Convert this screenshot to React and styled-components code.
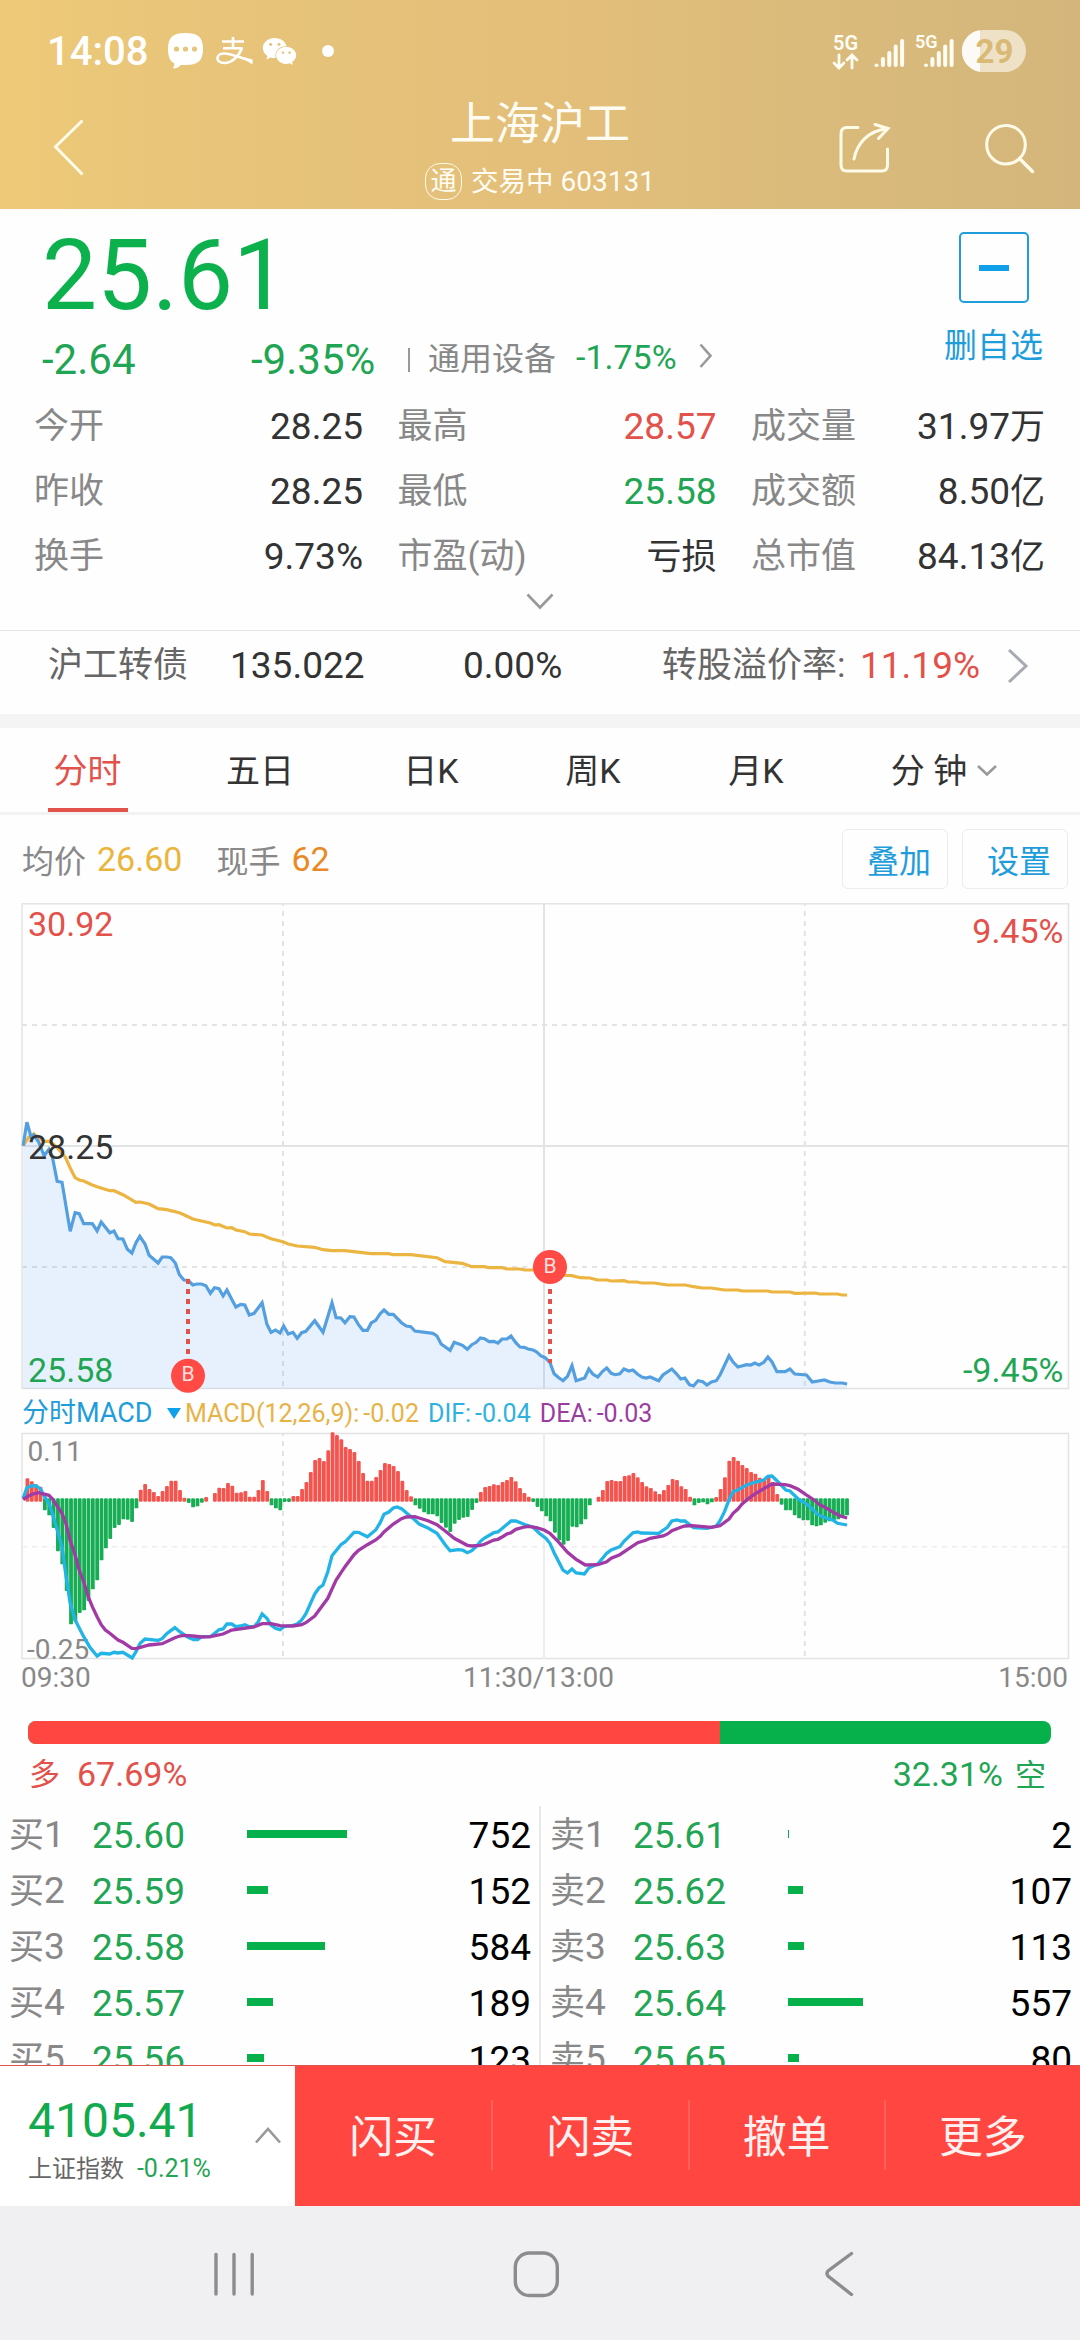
import React from 'react'
import styled, { createGlobalStyle } from 'styled-components'
import { FaWeixin } from 'react-icons/fa'

const RED = '#e2514a'
const GREEN = '#1fa553'
const BLUE = '#1f9ddb'

const stats = [
    ['今开', '28.25', '', '最高', '28.57', '', '成交量', '31.97', '万'],
    ['昨收', '28.25', '', '最低', '25.58', '', '成交额', '8.50', '亿'],
    ['换手', '9.73%', '', '市盈(动)', '', '亏损', '总市值', '84.13', '亿'],
]
const statColors = { '28.57': RED, '25.58': GREEN }

const tabs = ['分时', '五日', '日K', '周K', '月K', '分 钟']

const buys = [['25.60', 752], ['25.59', 152], ['25.58', 584], ['25.57', 189], ['25.56', 123]]
const sells = [['25.61', 2], ['25.62', 107], ['25.63', 113], ['25.64', 557], ['25.65', 80]]

const actions = ['闪买', '闪卖', '撤单', '更多']

const price = '67,767 78,697 90,740 98,735 112,755 128,797 142,778 152,800 166,874 180,877 204,1024 218,968 230,971 243,1001 268,1001 282,1023 294,996 319,1028 331,1023 343,1046 357,1047 370,1078 383,1089 395,1058 406,1039 421,1062 433,1096 459,1119 471,1101 484,1101 496,1103 509,1119 521,1154 534,1170 546,1171 560,1185 572,1182 585,1182 598,1187 611,1210 623,1193 636,1196 648,1218 659,1200 673,1228 685,1251 699,1243 711,1245 724,1275 738,1270 761,1238 775,1303 787,1327 800,1320 813,1329 824,1308 837,1332 851,1327 863,1345 876,1328 888,1324 914,1292 938,1327 950,1287 964,1238 976,1283 990,1284 1002,1298 1016,1280 1028,1281 1041,1304 1054,1321 1067,1321 1078,1299 1091,1291 1104,1271 1115,1260 1129,1273 1142,1273 1166,1298 1180,1308 1193,1310 1205,1323 1257,1330 1269,1338 1281,1362 1307,1381 1319,1357 1343,1366 1357,1378 1370,1364 1383,1357 1395,1344 1407,1346 1420,1355 1434,1354 1446,1359 1458,1347 1472,1347 1484,1338 1498,1358 1510,1371 1522,1372 1534,1377 1548,1380 1558,1385 1570,1397 1583,1403 1597,1417 1609,1451 1621,1462 1635,1472 1648,1459 1661,1427 1673,1472 1698,1464 1710,1437 1722,1453 1736,1461 1750,1444 1762,1434 1775,1450 1787,1454 1800,1451 1812,1437 1826,1443 1838,1440 1852,1453 1864,1461 1876,1464 1888,1461 1913,1472 1925,1455 1951,1437 1963,1450 1977,1467 1989,1464 2002,1484 2014,1488 2027,1472 2041,1475 2053,1485 2066,1476 2080,1472 2091,1455 2117,1397 2129,1416 2143,1431 2168,1424 2180,1425 2192,1419 2204,1425 2218,1417 2230,1401 2242,1416 2256,1445 2280,1445 2294,1437 2308,1452 2342,1455 2359,1476 2394,1470 2410,1476 2426,1479 2446,1479 2460,1482'
const average = '67,767 83,742 98,732 112,742 128,754 142,754 152,760 166,773 180,790 190,802 204,834 218,863 230,870 243,873 268,885 282,890 319,902 331,902 357,914 395,937 407,936 433,942 459,956 484,959 521,968 534,974 560,987 611,999 623,1005 636,1004 659,1014 673,1013 685,1020 711,1025 724,1032 761,1035 787,1046 824,1056 837,1062 863,1068 914,1072 938,1079 964,1082 1002,1082 1078,1091 1129,1091 1142,1094 1193,1094 1269,1103 1293,1115 1343,1120 1370,1130 1407,1130 1420,1133 1458,1133 1472,1137 1510,1137 1524,1140 1558,1140 1597,1150 1645,1156 1661,1157 1685,1163 1713,1164 1735,1170 1762,1170 1775,1173 1812,1172 1825,1176 1850,1176 1863,1179 1900,1179 1938,1185 1990,1185 2014,1190 2040,1194 2066,1194 2104,1200 2143,1200 2155,1203 2230,1203 2242,1206 2294,1206 2308,1210 2367,1209 2380,1212 2432,1212 2445,1215 2460,1215'
const dif = '67,325 78,293 90,288 104,287 118,297 128,318 142,340 152,370 166,420 180,470 192,560 204,640 218,690 243,740 260,770 282,798 294,790 319,792 331,787 343,789 357,787 370,795 384,804 395,785 407,760 421,747 459,751 471,746 484,731 496,722 508,713 522,725 546,742 562,749 574,749 585,740 611,740 636,719 648,717 659,702 673,702 685,710 699,708 711,704 724,710 738,710 750,695 761,672 775,685 787,705 800,715 813,719 825,710 851,706 863,702 876,690 888,672 914,612 926,594 938,585 952,545 964,497 990,464 1002,456 1028,427 1041,427 1067,440 1091,420 1104,398 1115,373 1129,366 1142,354 1153,351 1166,356 1180,368 1205,390 1217,402 1243,414 1269,430 1293,464 1307,482 1331,479 1343,480 1357,488 1370,482 1383,470 1395,454 1407,444 1434,428 1446,426 1484,393 1498,393 1522,403 1548,412 1566,430 1585,445 1597,460 1609,488 1635,540 1648,549 1661,537 1673,549 1697,552 1710,534 1736,522 1762,490 1775,480 1800,470 1812,454 1838,428 1852,426 1862,429 1913,430 1938,412 1951,393 1966,390 1977,393 1989,393 2014,413 2053,415 2080,408 2091,392 2104,365 2117,330 2129,305 2143,300 2168,285 2192,277 2218,270 2230,259 2242,258 2256,272 2282,300 2294,303 2318,327 2332,335 2346,345 2362,360 2376,374 2394,382 2406,386 2420,391 2432,400 2460,405'
const dea = '67,329 78,321 92,313 112,308 142,316 152,326 166,348 180,370 192,402 204,452 218,495 230,540 243,575 256,620 268,650 282,680 294,704 306,720 319,730 343,750 357,757 383,775 395,776 433,765 471,761 508,743 522,738 534,736 560,738 585,741 611,740 648,732 673,720 738,711 761,701 787,701 813,707 851,708 876,704 888,698 914,678 952,625 964,597 976,570 1002,530 1028,494 1041,481 1067,464 1091,450 1104,439 1115,426 1142,402 1166,386 1180,381 1205,380 1217,384 1243,392 1269,404 1293,423 1319,445 1357,466 1370,468 1395,466 1407,463 1434,450 1446,448 1458,441 1472,432 1484,428 1498,418 1522,411 1534,409 1558,413 1580,420 1597,430 1621,455 1648,487 1673,508 1700,525 1736,524 1762,515 1775,505 1800,494 1826,476 1852,458 1875,451 1888,445 1926,438 1940,431 1951,422 1977,412 1989,408 2010,407 2066,412 2091,407 2117,387 2129,370 2143,357 2155,342 2168,330 2192,312 2218,296 2242,282 2280,284 2294,287 2318,298 2346,318 2367,332 2380,344 2400,354 2420,367 2440,378 2460,384'
const ZERO = 329
const bars = [
    0, 265, 274, 283, 290, 360, 375, 413, 483, 522, 602, 702, 695, 668, 660, 632, 597, 570, 510, 474,
    446, 413, 404, 387, 388, 395, 354, 299, 282, 297, 306, 318, 303, 288, 272, 272, 300, 323, 338, 351,
    348, 337, 321, 0, 309, 293, 294, 279, 287, 308, 307, 303, 320, 320, 300, 270, 303, 345, 354, 360,
    335, 335, 318, 318, 297, 276, 246, 210, 204, 213, 181, 127, 135, 148, 171, 177, 186, 213, 249, 272,
    272, 261, 240, 219, 222, 228, 243, 272, 300, 319, 345, 355, 366, 372, 372, 378, 398, 412, 425, 400,
    389, 382, 380, 359, 338, 306, 291, 288, 283, 285, 276, 270, 261, 274, 294, 309, 320, 335, 350, 363,
    378, 393, 427, 450, 463, 452, 409, 411, 402, 387, 345, 0, 320, 300, 273, 270, 273, 273, 258, 256,
    249, 262, 276, 289, 294, 304, 312, 300, 285, 267, 270, 289, 297, 320, 345, 338, 336, 342, 336, 321,
    297, 262, 212, 201, 212, 225, 234, 246, 251, 263, 270, 262, 276, 312, 343, 360, 360, 375, 384, 390,
    390, 405, 408, 405, 397, 393, 390, 387, 382, 375,
]

const px = (x) => x / 2.904
const line = (data, top) =>
    data.split(' ').map(p => {
        const [x, y] = p.split(',')
        return `${px(x).toFixed(1)},${(y / 3 - top).toFixed(1)}`
    }).join(' ')

function Signal({ x }) {
    return [63.5, 57, 51, 44.5, 39].map((top, i) => (
        <rect key={top} x={x + i * 6.4} y={top - 30} width="4" height={67 - top} rx="2" fill="#fffdf3" />
    ))
}

function StatusBar() {
    return (
        <Status>
            <Clock>14:08</Clock>
            <svg width="35" height="36" viewBox="0 0 35 36">
                <path d="M17.500 0C30 0 35 4 35 16C35 28 30 32 17.500 32L13 32Q9 36 5.500 35.500Q4.500 35 6 33.500L6.500 30.500C1.500 28 0 23 0 16C0 4 5 0 17.500 0Z" fill="#fff" />
                <circle cx="8.500" cy="16" r="2.600" fill="#e8c57a" />
                <circle cx="17.500" cy="16" r="2.600" fill="#e8c57a" />
                <circle cx="26.500" cy="16" r="2.600" fill="#e8c57a" />
            </svg>
            <PayIcon width="37" height="28" viewBox="0 0 37 28" fill="none" stroke="#fff" strokeWidth="2.600">
                <path d="M6 4.500H28M17 0V11M7 11.200H26.500" />
                <path d="M26 11C23 19 16 26 8.500 26C-1 26 -.500 16.500 8 16.500C15 16.500 24 20.500 36 24.500" />
                <path d="M22 18.500L36.500 22.500V27.500Z" fill="#fff" stroke="none" />
            </PayIcon>
            <FaWeixin size={35} color="#fff" />
            <Dot />
            <Right>
                <svg width="194" height="42" viewBox="832 0 194 42">
                    <text x="833" y="20" fontSize="20" fontWeight="600" fill="#fffdf3">5G</text>
                    <path d="M839 25V37M834 33L839 38L844 33M852 38V26M847 30L852 25L857 30" fill="none" stroke="#fffdf3" strokeWidth="2.800" strokeLinecap="round" />
                    <Signal x={874.5} />
                    <text x="915" y="17.500" fontSize="18" fontWeight="600" fill="#fffdf3">5G</text>
                    <Signal x={924} />
                    <path d="M983 0H1005A21 21 0 0 1 1005 42H983A21 21 0 0 1 983 0Z" fill="#efe1c6" />
                    <path d="M980 .2V41.800A21 21 0 0 1 980 .2Z" fill="#fcfaf6" />
                    <text x="994.500" y="33" textAnchor="middle" fontSize="33" fontWeight="700" fill="#d8b976">29</text>
                </svg>
            </Right>
        </Status>
    )
}

function PriceChart() {
    return (
        <Chart width="1080" height="491" viewBox="0 0 1080 491">
            <g stroke="#e3e3e3" strokeWidth="1.500" fill="none">
                <rect x="22" y=".8" width="1046.500" height="484.700" />
                <path d="M22 243H1068M544 0V486" strokeWidth="2" />
                <path d="M22 122H1068M22 364H1068" strokeWidth="2" strokeDasharray="5 5" />
                <path d="M283 0V486M804.800 0V486" strokeWidth="2" strokeDasharray="5 5" strokeDashoffset="2" />
            </g>
            <polygon points={`${line(price, 13)} 847,485.500 23,485.500`} fill="#4a9eff" fillOpacity=".13" />
            <polyline points={line(average, 13)} fill="none" stroke="#ecb440" strokeWidth="3.200" />
            <polyline points={line(price, 13)} fill="none" stroke="#539fe0" strokeWidth="3.200" />
            <g stroke={RED} strokeWidth="4" strokeDasharray="5 5">
                <path d="M188 376V453" />
                <path d="M550 386V460" />
            </g>
            <g fontSize="21" fill="#ffe3e0" textAnchor="middle">
                <circle cx="188" cy="472.700" r="17" fill="#ff4a45" />
                <text x="188" y="478">B</text>
                <circle cx="550" cy="364" r="17" fill="#ff4a45" />
                <text x="550" y="370">B</text>
            </g>
            <g fontSize="34">
                <text x="28" y="32.700" fill={RED}>30.92</text>
                <text x="28" y="256.300" fill="#333">28.25</text>
                <text x="28" y="478.700" fill={GREEN}>25.58</text>
                <text x="1063.500" y="39.700" fill={RED} textAnchor="end">9.45%</text>
                <text x="1063.500" y="478.700" fill={GREEN} textAnchor="end">-9.45%</text>
            </g>
        </Chart>
    )
}

function MacdChart() {
    return (
        <Chart width="1080" height="230" viewBox="0 0 1080 230">
            <g stroke="#e3e3e3" strokeWidth="1.500" fill="none">
                <rect x="22" y="3.500" width="1046.500" height="225" />
                <path d="M544 3V229" strokeWidth="2" stroke="#ededed" />
                <path d="M22 116.700H1068" strokeWidth="1.500" stroke="#ededed" strokeDasharray="5 5" />
                <path d="M283 3V229M804.800 3V229" strokeWidth="2" strokeDasharray="5 5" strokeDashoffset="2" />
            </g>
            <g fontSize="28" fill="#888">
                <text x="27.500" y="31">0.11</text>
                <text x="27" y="229">-0.25</text>
            </g>
            {bars.map((v, i) => {
                if (!v) return null
                const up = v < ZERO
                const from = (up ? v : ZERO - 4) / 3 - 40
                const to = (up ? ZERO + 6 : v + 1) / 3 - 40
                return (
                    <rect key={i} x={px(67 + i * 12.66) - 1.9} y={from} width="3.800" height={to - from} rx="1.200" fill={up ? '#f4534e' : '#16ad53'} />
                )
            })}
            <polyline points={line(dif, 40)} fill="none" stroke="#22b4e6" strokeWidth="3.300" />
            <polyline points={line(dea, 40)} fill="none" stroke="#a23aa6" strokeWidth="3.300" />
        </Chart>
    )
}

function Orders({ name, rows }) {
    return (
        <Side>
            {rows.map(([value, volume], i) => (
                <Order key={value}>
                    <span><Han>{name}</Han>{i + 1}</span>
                    <b>{value}</b>
                    <i style={{ width: Math.ceil(volume / 752 * 100) }} />
                    <em>{volume}</em>
                </Order>
            ))}
        </Side>
    )
}

export default function App() {
    return (
        <Screen>
            <GlobalStyle />
            <Header>
                <StatusBar />
                <TitleBar>
                    <svg width="110" height="117" viewBox="0 0 110 117" fill="none" stroke="#fffbe9" strokeWidth="3">
                        <path d="M82.500 28.500L55.500 54.800L82.500 82.500" />
                    </svg>
                    <Title>
                        <h1>上海沪工</h1>
                        <p><Badge>通</Badge><Han>交易中</Han> 603131</p>
                    </Title>
                    <svg width="250" height="117" viewBox="830 92 250 117" fill="none" stroke="#fffbe9" strokeWidth="3" strokeLinecap="round">
                        <path d="M858 127.500H847Q841 127.500 841 133.500V165Q841 171 847 171H881.500Q887.500 171 887.500 165V149" />
                        <path d="M854 159C857 144 867 131 887 128.800M875 124.500L888 128.500L878.500 138.500" />
                        <circle cx="1006" cy="144.700" r="19.300" />
                        <path d="M1019.500 158.500L1032.500 171.500" strokeWidth="3.500" />
                    </svg>
                </TitleBar>
            </Header>

            <Quote>
                <Latest>
                    <h2>25.61</h2>
                    <Change>
                        <span>-2.64</span>
                        <span>-9.35%</span>
                        <Industry>
                            通用设备
                            <b>-1.75%</b>
                            <svg width="14" height="26" viewBox="0 0 14 26" fill="none" stroke="#999" strokeWidth="2.600">
                                <path d="M1.500 1.500L11.500 12.800L1.500 24" />
                            </svg>
                        </Industry>
                    </Change>
                </Latest>
                <Remove>
                    <div><i /></div>
                    删自选
                </Remove>
            </Quote>
            <Stats>
                {stats.map(row => [0, 3, 6].map(i => (
                    <Stat key={row[i]} $color={statColors[row[i + 1]]}>
                        <label>{row[i]}</label>
                        <span>{row[i + 1]}<Han>{row[i + 2]}</Han></span>
                    </Stat>
                )))}
            </Stats>
            <Expand>
                <svg width="28" height="18" viewBox="0 0 28 18" fill="none" stroke="#999" strokeWidth="2.600">
                    <path d="M1.500 1.500L14 14.500L26.500 1.500" />
                </svg>
            </Expand>

            <Bond>
                <Han>沪工转债</Han>
                <span>135.022</span>
                <span>0.00%</span>
                <Han>转股溢价率:</Han>
                <b>11.19%</b>
                <svg width="22" height="34" viewBox="0 0 22 34" fill="none" stroke="#a5abb0" strokeWidth="3">
                    <path d="M2 1L19 17L2 33" />
                </svg>
            </Bond>

            <Tabs>
                {tabs.map((tab, i) => (
                    <Tab key={tab} $active={i === 0}>
                        <span>{tab}</span>
                        {i === 5 && (
                            <svg width="20" height="13" viewBox="0 0 20 13" fill="none" stroke="#999" strokeWidth="2.600">
                                <path d="M1 2L10 10.500L19 2" />
                            </svg>
                        )}
                    </Tab>
                ))}
            </Tabs>

            <Info>
                均价<Num $color="#eab53c">26.60</Num>
                <Second>现手</Second><Num $color="#e98a27">62</Num>
                <Right>
                    <Outline>叠加</Outline>
                    <Outline>设置</Outline>
                </Right>
            </Info>
            <PriceChart />
            <Legend>
                <Indicator>分时MACD</Indicator>
                <svg width="14" height="11" viewBox="0 0 14 11"><path d="M0 0H14L7 11Z" fill="#10a0ea" /></svg>
                <Reading $color="#e7b347">MACD(12,26,9):<i>-0.02</i></Reading>
                <Reading $color="#2fb1df">DIF:<i>-0.04</i></Reading>
                <Reading $color="#9a3d9f">DEA:<i>-0.03</i></Reading>
            </Legend>
            <MacdChart />
            <Axis>
                <span>09:30</span>
                <span>11:30/13:00</span>
                <span>15:00</span>
            </Axis>

            <Ratio><i style={{ width: '67.69%' }} /></Ratio>
            <RatioText>
                <span>多</span>67.69%
                <b>32.31%<span>空</span></b>
            </RatioText>
            <Book>
                <Orders name="买" rows={buys} />
                <Orders name="卖" rows={sells} />
            </Book>

            <Footer>
                <Index>
                    <div>
                        <h3>4105.41</h3>
                        <p>上证指数 <b>-0.21%</b></p>
                    </div>
                    <svg width="26" height="17" viewBox="0 0 26 17" fill="none" stroke="#999" strokeWidth="2.600">
                        <path d="M1 15.500L13 2L25 15.500" />
                    </svg>
                </Index>
                {actions.map(a => <Action key={a}>{a}</Action>)}
            </Footer>
            <NavBar>
                <svg width="1080" height="135" viewBox="0 0 1080 135" fill="none" stroke="#8c8c8e" strokeWidth="3.400" strokeLinecap="round">
                    <path d="M216 48.500V88M234 48.500V88M252.200 48.500V88" />
                    <rect x="515.300" y="47" width="42" height="42.500" rx="14" />
                    <path d="M851.500 47.500L828 65Q826 67.500 828 70L851.500 88.500" />
                </svg>
            </NavBar>
        </Screen>
    )
}

const GlobalStyle = createGlobalStyle`
    * {
        box-sizing: border-box;
        margin: 0;
        padding: 0;
    }
    body {
        font-family: Roboto, "Noto Sans CJK SC", sans-serif;
        background: #fff;
    }
    svg {
        display: block;
        flex: none;
    }
    h1, h2, h3, b {
        font-weight: 400;
    }
    i, em {
        font-style: normal;
    }
`
const Screen = styled.div`
    width: 1080px;
    height: 2340px;
    display: flex;
    flex-direction: column;
    overflow: hidden;
    background: #fefefe;
    color: #333;
    white-space: nowrap;
    > * {
        flex: none;
    }
`
const Han = styled.span`
    font-size: 35px;
`
const Header = styled.header`
    height: 209px;
    background: linear-gradient(90deg, #eeca78 0%, #e8c579 15%, #e2be7a 55%, #dabb7b 75%, #d4b67c 100%);
    color: #fffdf3;
`
const Status = styled.div`
    height: 92px;
    padding: 10px 54px 0 47px;
    display: flex;
    align-items: center;
`
const Clock = styled.div`
    width: 121px;
    font-size: 40px;
    font-weight: 500;
    color: #fff;
`
const PayIcon = styled.svg`
    margin: 0 9px 0 13px;
`
const Dot = styled.div`
    width: 12px;
    height: 12px;
    margin-left: 25px;
    border-radius: 50%;
    background: #fff;
`
const Right = styled.div`
    margin-left: auto;
    display: flex;
    gap: 14px;
`
const TitleBar = styled.div`
    height: 117px;
    display: grid;
    grid-template-columns: 110px 1fr 250px;
`
const Title = styled.div`
    padding: 3px 0 0 140px;
    display: flex;
    flex-direction: column;
    align-items: center;
    h1 {
        font-size: 45px;
        line-height: 60px;
    }
    p {
        display: flex;
        align-items: center;
        gap: 7px;
        height: 53px;
        font-size: 28px;
        line-height: 53px;
    }
    ${Han} {
        font-size: 27.5px;
    }
`
const Badge = styled.span`
    width: 37px;
    height: 37px;
    margin-right: 2px;
    border: 1.5px solid #fffbe9;
    border-radius: 15px;
    font-size: 26px;
    line-height: 35px;
    text-align: center;
`
const Quote = styled.section`
    height: 168px;
    padding-right: 37px;
    display: flex;
    justify-content: space-between;
`
const Latest = styled.div`
    padding-left: 42px;
    color: ${GREEN};
    h2 {
        font-size: 98px;
        line-height: 133px;
        color: #0cb04d;
    }
`
const Change = styled.div`
    height: 35px;
    display: flex;
    align-items: center;
    font-size: 42px;
    line-height: 35px;
    > span:first-child {
        width: 209px;
    }
    > span + span {
        width: 157px;
    }
`
const Industry = styled.div`
    height: 24px;
    padding-left: 18px;
    border-left: 2px solid #999;
    display: flex;
    align-items: center;
    font-size: 32px;
    line-height: 37px;
    color: #888;
    b {
        margin-left: 20px;
        padding-bottom: 5px;
        width: 123px;
        font-size: 34px;
        color: ${GREEN};
    }
    svg {
        margin-bottom: 7px;
    }
`
const Remove = styled.div`
    padding-top: 23px;
    display: flex;
    flex-direction: column;
    align-items: center;
    font-size: 33px;
    line-height: 42px;
    color: ${BLUE};
    div {
        width: 70px;
        height: 71px;
        margin-bottom: 22px;
        border: 2.5px solid ${BLUE};
        border-radius: 5px;
        display: flex;
        align-items: center;
        justify-content: center;
    }
    i {
        width: 30px;
        height: 6px;
        background: #10a0ea;
    }
`
const Stats = styled.section`
    padding: 17px 35px 0 34px;
    display: grid;
    grid-template-columns: 329px 319px 294px;
    justify-content: space-between;
    grid-auto-rows: 65px;
`
const Stat = styled.div`
    display: flex;
    justify-content: space-between;
    line-height: 65px;
    font-size: 37px;
    color: ${p => p.$color || '#333'};
    label {
        font-size: 35px;
        color: #888;
    }
`
const Expand = styled.div`
    height: 41px;
    padding-top: 4px;
    display: flex;
    justify-content: center;
`
const Bond = styled.section`
    height: 98px;
    padding: 0 0 14px 48px;
    border-top: 1.5px solid #e3e3e3;
    border-bottom: 14px solid #f4f4f4;
    display: grid;
    grid-template-columns: 182px 233px 199px 198px 147px auto;
    justify-content: start;
    align-items: center;
    font-size: 37px;
    line-height: 40px;
    ${Han} {
        color: #666;
    }
    b {
        color: ${RED};
    }
`
const Tabs = styled.nav`
    display: grid;
    grid-template-columns: 175px 170px 172px 152px 174px 202px;
    border-bottom: 3px solid #f2f2f2;
`
const Tab = styled.div`
    height: 84px;
    display: flex;
    justify-content: center;
    align-items: center;
    gap: 10px;
    font-size: 34px;
    color: ${p => p.$active ? RED : '#333'};
    span {
        height: 84px;
        line-height: 87px;
        padding: 0 ${p => p.$active ? 6 : 0}px;
        box-shadow: ${p => p.$active ? `inset 0 -4px ${RED}` : 'none'};
    }
`
const Info = styled.div`
    height: 88px;
    padding: 0 12px 0 22px;
    display: flex;
    align-items: center;
    font-size: 32px;
    color: #888;
`
const Num = styled.span`
    margin-left: 11px;
    font-size: 34px;
    color: ${p => p.$color};
`
const Second = styled.span`
    margin-left: 34px;
`
const Outline = styled.button`
    width: 106px;
    height: 60px;
    padding-left: 8px;
    border: 1.5px solid #ececec;
    border-radius: 6px;
    background: none;
    font: inherit;
    color: ${BLUE};
`
const Chart = styled.svg`
    overflow: visible;
`
const Legend = styled.div`
    height: 36px;
    padding: 3px 0 0 22px;
    display: flex;
    align-items: center;
    font-size: 25px;
    line-height: 33px;
`
const Indicator = styled.span`
    width: 145px;
    font-size: 27px;
    color: ${BLUE};
`
const Reading = styled.span`
    margin-left: 4px;
    color: ${p => p.$color};
    i {
        margin-left: 4px;
    }
    & + & {
        margin-left: 9px;
    }
`
const Axis = styled.div`
    padding: 0 12px 0 21px;
    display: flex;
    justify-content: space-between;
    font-size: 28px;
    line-height: 35px;
    color: #888;
    span:nth-child(2) {
        margin-right: 12px;
    }
`
const Ratio = styled.div`
    height: 23px;
    margin: 26px 29px 0 28px;
    border-radius: 8px;
    overflow: hidden;
    background: #06b04b;
    i {
        display: block;
        height: 100%;
        background: #ff4641;
    }
`
const RatioText = styled.div`
    padding: 0 34px 0 29px;
    display: flex;
    font-size: 34px;
    line-height: 61px;
    color: ${RED};
    span {
        width: 48px;
        font-size: 31px;
    }
    b {
        margin-left: auto;
        color: ${GREEN};
    }
    b span {
        margin-left: 12px;
    }
`
const Book = styled.section`
    height: 259px;
    display: grid;
    grid-template-columns: 541px 539px;
    overflow: hidden;
`
const Side = styled.div`
    padding: 1px 8px 0 9px;
    &:first-child {
        border-right: 2px solid #e8e8e8;
    }
`
const Order = styled.div`
    height: 56px;
    display: grid;
    grid-template-columns: 83px 155px 150px 1fr;
    align-items: center;
    font-size: 37px;
    line-height: 56px;
    color: #888;
    b {
        color: ${GREEN};
    }
    i {
        height: 8px;
        margin-bottom: 4px;
        background: #06b04b;
    }
    em {
        color: #000;
        text-align: right;
    }
`
const Footer = styled.footer`
    height: 141px;
    border-top: 1px solid #e0524d;
    display: grid;
    grid-template-columns: 295px repeat(4, 1fr);
    background: #ff4641;
`
const Index = styled.div`
    padding: 30px 14px 0 28px;
    display: flex;
    justify-content: space-between;
    background: #fff;
    h3 {
        font-size: 48px;
        line-height: 50px;
        color: #12aa4e;
    }
    p {
        margin-top: 8px;
        font-size: 24px;
        line-height: 30px;
        color: #666;
    }
    b {
        margin-left: 7px;
        font-size: 25px;
        color: ${GREEN};
    }
    svg {
        margin-top: 31px;
    }
`
const Action = styled.div`
    height: 70px;
    margin: 34px 0;
    text-align: center;
    font-size: 44px;
    line-height: 76px;
    color: #fff1ef;
    & + & {
        border-left: 2px solid #ff625b;
    }
`
const NavBar = styled.div`
    height: 135px;
    background: #f0f0f3;
`
